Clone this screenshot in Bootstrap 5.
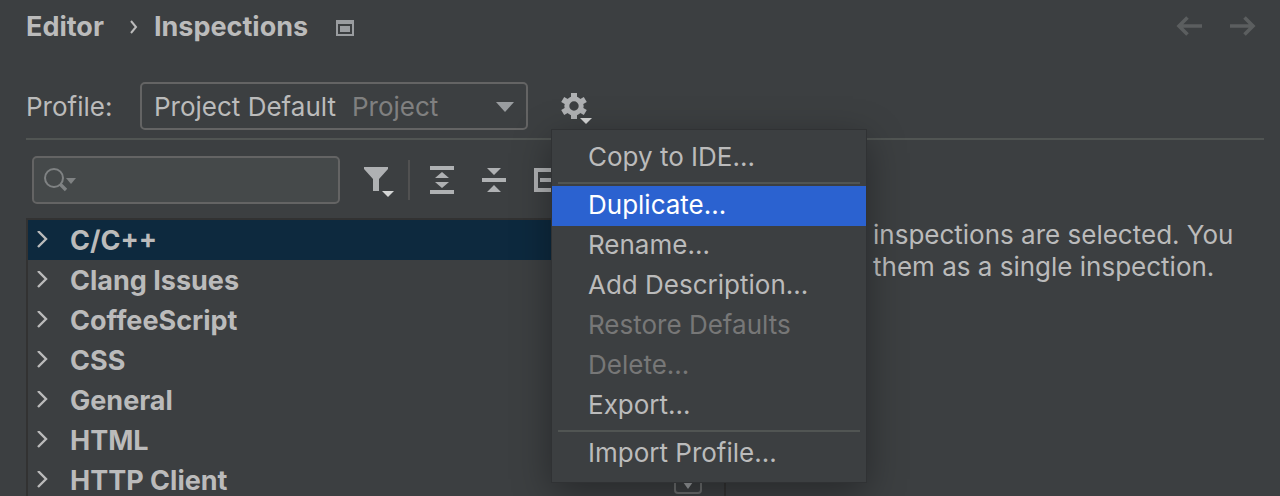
<!DOCTYPE html>
<html lang="en" data-bs-theme="dark">
<head>
<meta charset="utf-8">
<meta name="viewport" content="width=device-width, initial-scale=1">
<title>Editor › Inspections</title>
<link href="https://cdn.jsdelivr.net/npm/bootstrap@5.3.0/dist/css/bootstrap.min.css" rel="stylesheet">
<style>
  :root { --ide-bg: #3c3f41; --ide-text: #bbbbbb; --ide-line: #515553; --ide-edge: #646464; }
  body { background: var(--ide-bg); color: var(--ide-text); font-family: Inter, "Liberation Sans", sans-serif; font-size: 26px; line-height: 32px; }
  svg { display: block; flex: none; }
  button { color: inherit; }
  .page-head { height: 54px; padding: 0 22px 0 26px; }
  .crumb { color: inherit; font-size: 27px; font-weight: 700; text-decoration: none; }
  .crumb-arrow { margin: 0 16px 0 26px; }
  .crumb-icon { margin: 2px 0 0 28px; }
  .profile-bar { margin: 28px 16px 0 26px; padding-bottom: 8px; border-bottom: 2px solid var(--ide-line); }
  .profile-label { width: 114px; padding-top: 2px; }
  .profile-select { width: 388px; height: 48px; padding: 2px 12px 0; border: 2px solid var(--ide-edge); border-radius: 5px; background: var(--ide-bg); }
  .scope { color: #808080; }
  .gear-box { margin-left: 24px; }
  .gear-btn { width: 48px; height: 48px; padding: 10px 8px; border: 0; background: none; }
  .gear-menu { top: 100%; left: 0; width: 314px; padding: 8px 0; border: 0; border-radius: 0; background: var(--ide-bg); font-size: inherit; box-shadow: 0 0 0 1px #303234, 0 10px 36px rgba(0,0,0,.36); }
  .gear-menu .dropdown-item { height: 40px; padding: 3px 36px 5px; color: var(--ide-text); }
  .gear-menu .dropdown-item.active { background: #2b62d0; color: #fff; }
  .gear-menu .dropdown-item:disabled { color: #777777; }
  .gear-menu .dropdown-divider { margin: 4px 6px 2px; border-top: 2px solid #515553; opacity: 1; }
  .content { padding-left: 26px; }
  .tree-pane { width: 700px; flex: none; }
  .tools { height: 78px; padding: 2px 6px 0; }
  .search-box { width: 308px; height: 48px; padding-left: 8px; border: 2px solid var(--ide-edge); border-radius: 5px; background: #45494a; }
  .search-box input { min-width: 0; border: 0; outline: 0; background: none; color: inherit; }
  .tool-btn { padding: 0; border: 0; background: none; }
  .filter-btn { padding-top: 4px; }
  .tool-rule { width: 2px; height: 40px; margin: 0 20px 0 14px; background: #515151; }
  .tree { border: 2px solid #323232; border-bottom: 0; }
  .tree-row { height: 40px; padding: 2px 0 0 8px; gap: 20px; font-size: 27px; font-weight: 700; }
  .tree-row.selected { background: #0d293e; }
  .side-text { padding: 79px 16px 0 147px; }
  .row-toggle { right: 24px; bottom: 2px; width: 28px; height: 28px; border: 2px solid #6b6d6e; border-radius: 4px; background: none; padding: 0; }
</style>
</head>
<body>
<div class="vh-100 overflow-hidden d-flex flex-column">
  <header class="page-head d-flex align-items-center flex-shrink-0">
    <nav class="d-flex align-items-center" aria-label="Breadcrumb">
      <a class="crumb" href="#">Editor</a>
      <svg class="crumb-arrow" width="8" height="14" viewBox="0 0 8 14" fill="none" stroke="#bbb" stroke-width="2"><path d="M1 1l5 6-5 6"/></svg>
      <a class="crumb" href="#">Inspections</a>
    </nav>
    <svg class="crumb-icon" width="18" height="16" viewBox="0 0 18 16" fill="#9a9da0"><path fill-rule="evenodd" d="M0 0h18v16H0zM2 4v10h14V4z"/><path d="M4 6h10v6H4z"/></svg>
    <div class="ms-auto d-flex gap-4">
      <button class="tool-btn" aria-label="Back"><svg width="30" height="22" viewBox="0 0 30 22" fill="none" stroke="#5b5e5f" stroke-width="3.6"><path d="M28 10H4M13.500 1.500L5 10l8.500 8.500"/></svg></button>
      <button class="tool-btn" aria-label="Forward"><svg width="30" height="22" viewBox="0 0 30 22" fill="none" stroke="#5b5e5f" stroke-width="3.6"><path d="M2 10h24M16.500 1.500L25 10l-8.500 8.500"/></svg></button>
    </div>
  </header>

  <section class="profile-bar d-flex align-items-center flex-shrink-0">
    <label class="profile-label" for="profile">Profile:</label>
    <button class="profile-select d-flex align-items-center" id="profile" aria-haspopup="listbox">
      <span>Project Default</span><span class="scope ms-3">Project</span>
      <svg class="ms-auto" width="18" height="10" viewBox="0 0 18 10" fill="#9a9da0"><path d="M0 0h18L9 10z"/></svg>
    </button>
    <div class="gear-box position-relative">
      <button class="gear-btn" aria-label="Profile actions" aria-expanded="true">
        <svg width="32" height="32" viewBox="0 0 32 32"><g fill="none" stroke="#afb1b3"><circle cx="14" cy="14" r="7.200" stroke-width="5"/><path stroke-width="6" d="M14 1v6M14 21v6M2.700 7.500l5.200 3M20.100 17.500l5.200 3M25.300 7.500l-5.200 3M7.900 17.500l-5.200 3"/></g><path d="M20 26h12l-6 6z" fill="#d4d5d5"/></svg>
      </button>
      <div class="gear-menu dropdown-menu show">
        <button class="dropdown-item">Copy to IDE...</button>
        <hr class="dropdown-divider">
        <button class="dropdown-item active">Duplicate...</button>
        <button class="dropdown-item">Rename...</button>
        <button class="dropdown-item">Add Description...</button>
        <button class="dropdown-item" disabled>Restore Defaults</button>
        <button class="dropdown-item" disabled>Delete...</button>
        <button class="dropdown-item">Export...</button>
        <hr class="dropdown-divider">
        <button class="dropdown-item">Import Profile...</button>
      </div>
    </div>
  </section>

  <main class="content d-flex flex-grow-1 overflow-hidden">
    <section class="tree-pane position-relative">
      <div class="tools d-flex align-items-center">
        <div class="search-box d-flex align-items-center">
          <svg width="34" height="26" viewBox="0 0 34 26"><g fill="none" stroke="#7f8283"><circle cx="12" cy="11" r="9" stroke-width="2"/><path d="M18 17l6 6" stroke-width="3.4"/></g><path d="M24 11h10l-5 6z" fill="#7f8283"/></svg>
          <input class="flex-grow-1" type="text" aria-label="Search inspections">
        </div>
        <button class="tool-btn filter-btn ms-4" aria-label="Filter"><svg width="30" height="30" viewBox="0 0 30 30"><path d="M0 0h24v2l-9 10v12H9V12L0 2z" fill="#afb1b3"/><path d="M18 24h12l-6 6z" fill="#d4d5d5"/></svg></button>
        <div class="tool-rule"></div>
        <button class="tool-btn" aria-label="Expand all"><svg width="24" height="28" viewBox="0 0 24 28" fill="#afb1b3"><path d="M0 0h24v4H0zM0 24h24v4H0zM5 12l7-6 7 6zM5 16h14l-7 6z"/></svg></button>
        <button class="tool-btn ms-4 ps-1" aria-label="Collapse all"><svg width="24" height="26" viewBox="0 0 24 26" fill="#afb1b3"><path d="M0 11h24v4H0zM5 1h14l-7 7zM5 25l7-7 7 7z"/></svg></button>
        <button class="tool-btn ms-4 ps-1" aria-label="Group"><svg width="24" height="24" viewBox="0 0 24 24" fill="#afb1b3"><path d="M0 0h24v4H4v16h20v4H0zM6 10h18v4H6z"/></svg></button>
      </div>
      <div class="tree" role="tree">
        <div class="tree-row selected d-flex align-items-center" role="treeitem">C/C++</div>
        <div class="tree-row d-flex align-items-center" role="treeitem">Clang Issues</div>
        <div class="tree-row d-flex align-items-center" role="treeitem">CoffeeScript</div>
        <div class="tree-row d-flex align-items-center" role="treeitem">CSS</div>
        <div class="tree-row d-flex align-items-center" role="treeitem">General</div>
        <div class="tree-row d-flex align-items-center" role="treeitem">HTML</div>
        <div class="tree-row d-flex align-items-center" role="treeitem">HTTP Client</div>
      </div>
      <button class="row-toggle position-absolute d-flex align-items-center justify-content-center" aria-label="More options"><svg width="10" height="20" viewBox="0 0 10 20" fill="#9a9da0"><path d="M0 12h10l-5 7z"/></svg></button>
    </section>
    <p class="side-text mb-0">inspections are selected. You<br>them as a single inspection.</p>
  </main>
</div>
<script src="https://cdn.jsdelivr.net/npm/bootstrap@5.3.0/dist/js/bootstrap.bundle.min.js"></script>
<script>
  const arrow = '<svg width="14" height="20" viewBox="0 0 14 20" fill="none" stroke="#bbb" stroke-width="2.4"><path d="M2 0l8 8-8 8"/></svg>';
  document.querySelectorAll('.tree-row').forEach(row => row.insertAdjacentHTML('afterbegin', arrow));
</script>
</body>
</html>
